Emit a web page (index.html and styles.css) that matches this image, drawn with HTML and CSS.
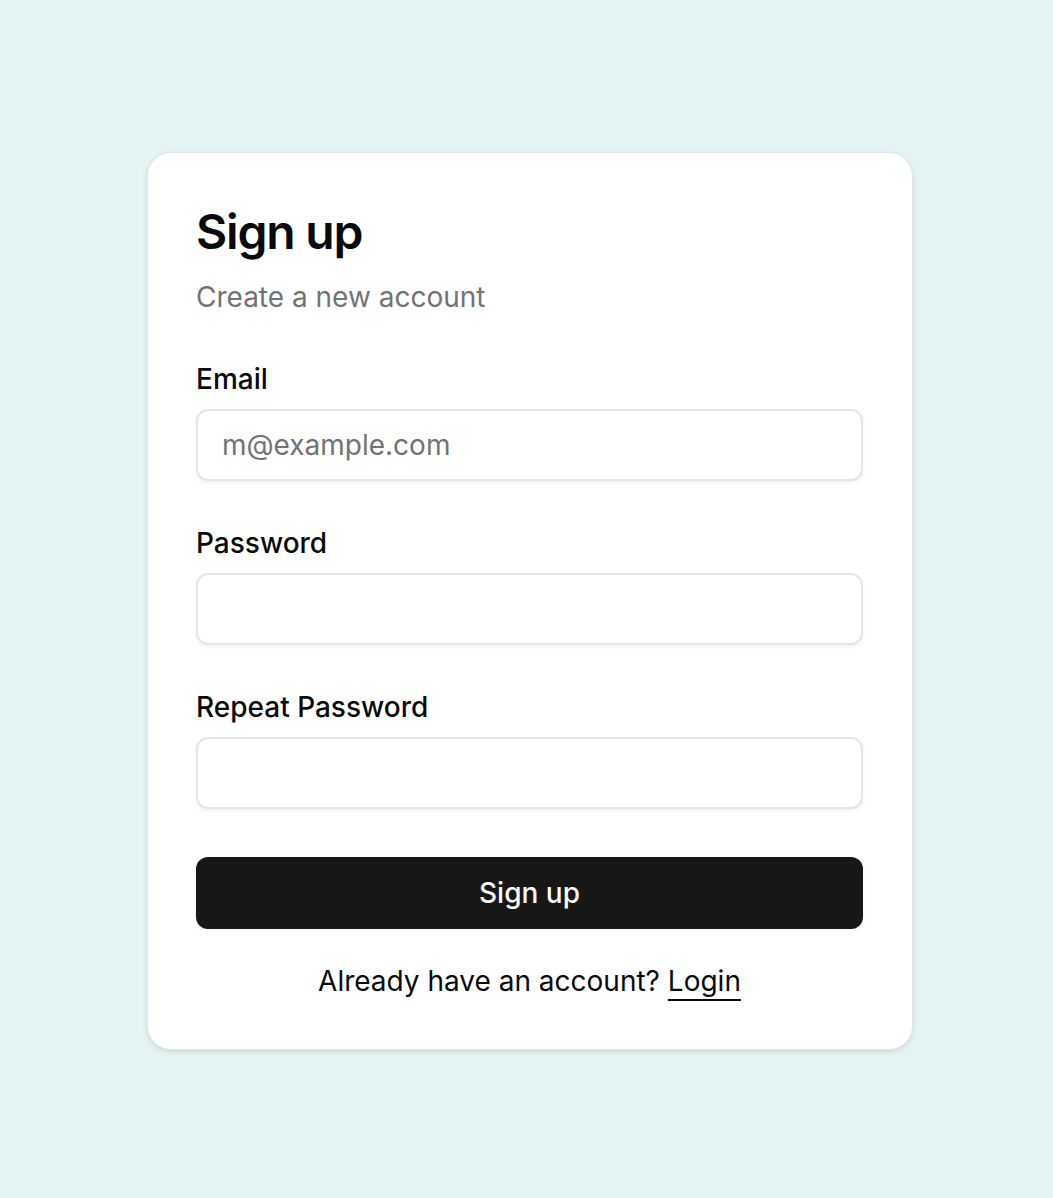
FILE: index.html
```html
<!DOCTYPE html>
<html lang="en">
<head>
<meta charset="utf-8">
<title>Sign up</title>
<link rel="stylesheet" href="styles.css">
</head>
<body>
<main class="page">
  <section class="card">
    <header class="card-header">
      <h1 class="card-title">Sign up</h1>
      <p class="card-description">Create a new account</p>
    </header>
    <form class="form">
      <div class="field">
        <label class="label" for="email">Email</label>
        <input class="input" id="email" type="email" placeholder="m@example.com">
      </div>
      <div class="field">
        <label class="label" for="password">Password</label>
        <input class="input" id="password" type="password">
      </div>
      <div class="field">
        <label class="label" for="repeat">Repeat Password</label>
        <input class="input" id="repeat" type="password">
      </div>
      <button class="button" type="button">Sign up</button>
    </form>
    <p class="footer">Already have an account? <a class="link" href="#">Login</a></p>
  </section>
</main>
</body>
</html>
```

FILE: styles.css
```css
* { box-sizing: border-box; }

html, body {
  margin: 0;
  padding: 0;
}

body {
  background: #e4f4f4;
  font-family: Inter, "Noto Sans", sans-serif;
  color: #0a0a0a;
  -webkit-font-smoothing: antialiased;
}

.page {
  min-height: 1198px;
  padding: 152px 0 0 147px;
}

.card {
  width: 766px;
  background: #ffffff;
  border: 1px solid #e5e5e5;
  border-radius: 24px;
  box-shadow: 0 2px 6px 0 rgba(0, 0, 0, 0.08), 0 2px 4px -2px rgba(0, 0, 0, 0.08);
  padding: 47px 49px 48px 48px;
}

.card-header {
  display: flex;
  flex-direction: column;
  gap: 13px;
  margin-bottom: 48px;
}

.card-title {
  margin: 0;
  font-size: 48px;
  line-height: 64px;
  font-weight: 600;
  letter-spacing: -1.2px;
  color: #0a0a0a;
}

.card-description {
  margin: 0;
  font-size: 28px;
  line-height: 40px;
  color: #737373;
}

.form {
  display: flex;
  flex-direction: column;
  gap: 48px;
}

.field {
  display: flex;
  flex-direction: column;
  gap: 16px;
}

.label {
  font-size: 28px;
  line-height: 28px;
  font-weight: 500;
  color: #0a0a0a;
}

.input {
  width: 100%;
  height: 72px;
  border: 2px solid #e5e5e5;
  border-radius: 12px;
  background: #ffffff;
  padding: 0 24px;
  font-family: Inter, "Noto Sans", sans-serif;
  font-size: 28px;
  color: #0a0a0a;
  box-shadow: 0 2px 4px 0 rgba(0, 0, 0, 0.05);
  outline: none;
}

.input::placeholder {
  color: #737373;
}

.button {
  width: 100%;
  height: 72px;
  border: none;
  border-radius: 12px;
  background: #171717;
  color: #fafafa;
  font-family: Inter, "Noto Sans", sans-serif;
  font-size: 28px;
  font-weight: 500;
  box-shadow: 0 2px 4px 0 rgba(0, 0, 0, 0.05);
  cursor: pointer;
}

.footer {
  margin: 32px 0 0;
  text-align: center;
  font-size: 28px;
  line-height: 40px;
  color: #0a0a0a;
}

.link {
  color: #0a0a0a;
  text-decoration: underline;
  text-decoration-thickness: 2px;
  text-underline-offset: 8px;
}
```
